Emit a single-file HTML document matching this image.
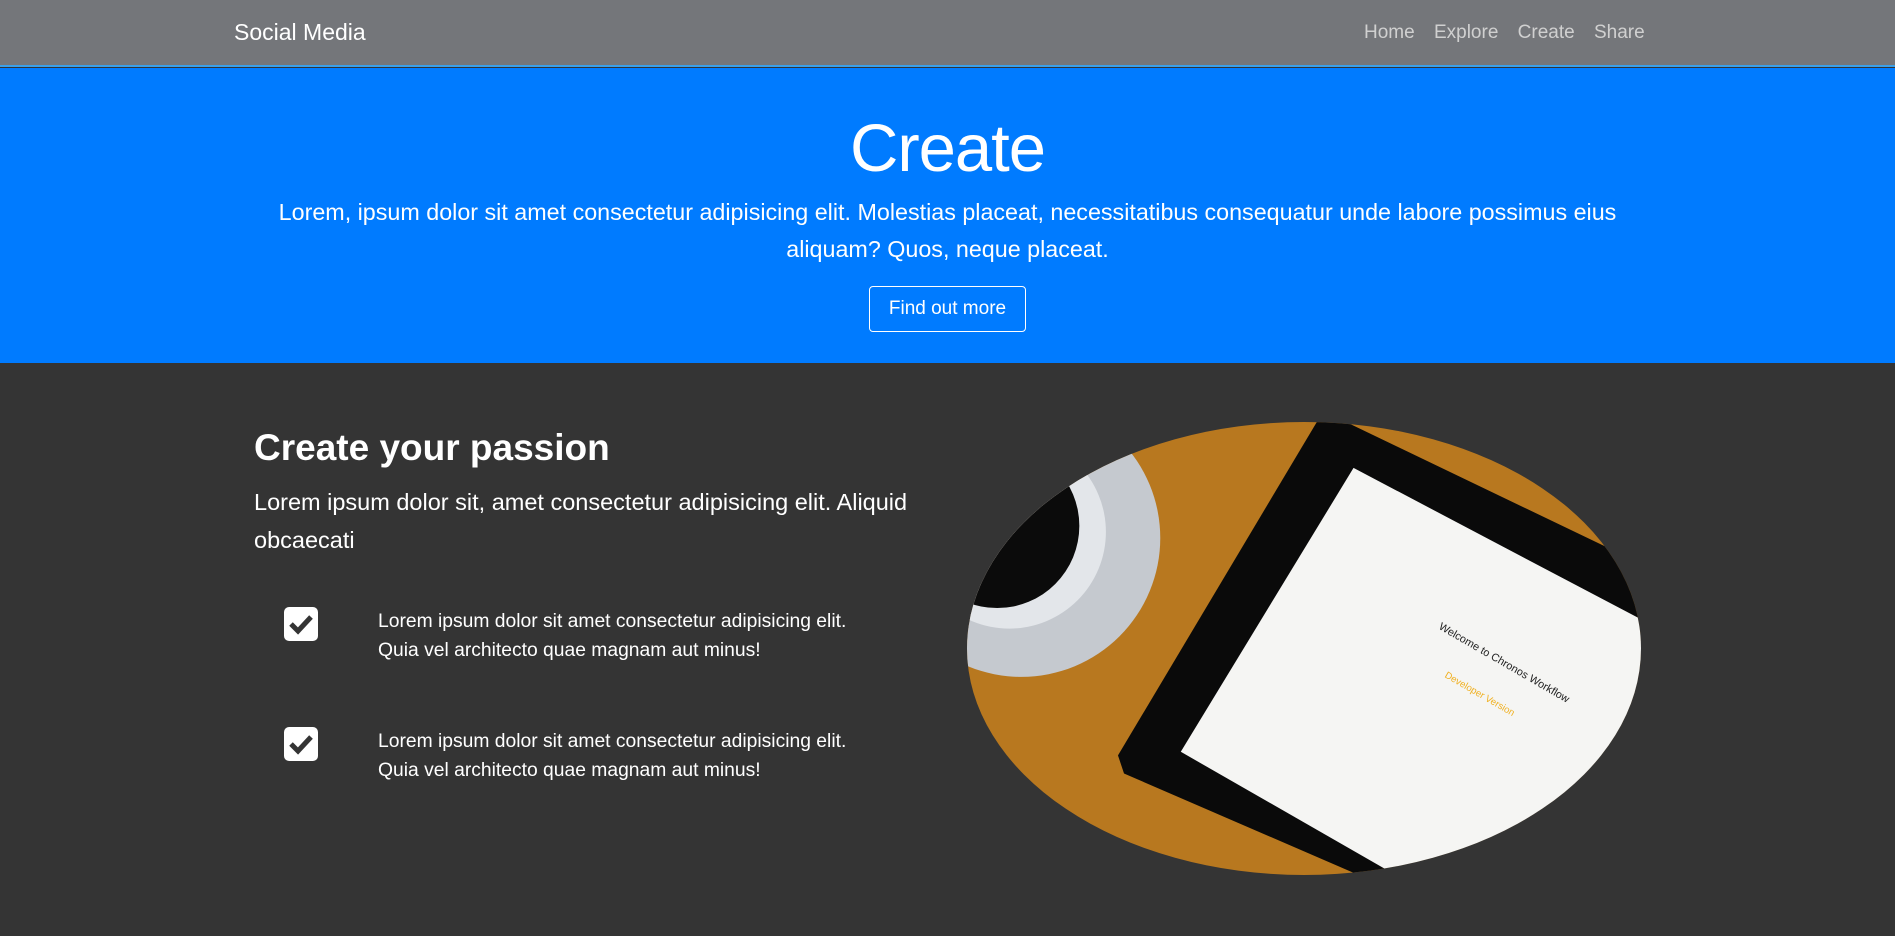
<!DOCTYPE html>
<html><head><meta charset="utf-8"><style>
*{margin:0;padding:0;box-sizing:border-box}
body{width:1895px;height:936px;overflow:hidden;background:#343434;font-family:"Liberation Sans",sans-serif;position:relative}
.nav{position:absolute;left:0;top:0;width:1895px;height:67px;background:#74767a;border-bottom:2px solid #3ba0e8}
.brand{position:absolute;left:234px;top:19px;color:#fff;font-size:23px}
.links{position:absolute;left:1364px;top:22px;color:#d0d0d0;font-size:19px;word-spacing:14px}
.hero{position:absolute;left:0;top:68px;width:1895px;height:295px;background:#007bff;color:#fff;text-align:center}
.hero h1{font-weight:300;font-size:67px;position:absolute;top:42px;width:100%;letter-spacing:-1px}
.hero p{position:absolute;left:265px;width:1365px;top:126px;font-size:23.3px;line-height:37px}
.btn{position:absolute;left:869px;top:218px;width:157px;height:46px;border:1px solid #fff;border-radius:4px;font-size:19px;line-height:44px}
h2{position:absolute;left:254px;top:427px;color:#fff;font-size:37px;font-weight:bold}
.sub{position:absolute;left:254px;top:483px;width:700px;color:#fff;font-size:23.5px;line-height:38px}
.chk{position:absolute;left:284px;width:34px;height:34px;background:#fff;border-radius:5px}
.txt{position:absolute;left:378px;color:#fff;font-size:19.3px;line-height:29px}
</style></head><body>
<div class="nav"><div class="brand">Social Media</div><div class="links">Home Explore Create Share</div></div>
<div class="hero"><h1>Create</h1><p>Lorem, ipsum dolor sit amet consectetur adipisicing elit. Molestias placeat, necessitatibus consequatur unde labore possimus eius aliquam? Quos, neque placeat.</p><div class="btn">Find out more</div></div>
<h2>Create your passion</h2>
<div class="sub">Lorem ipsum dolor sit, amet consectetur adipisicing elit. Aliquid obcaecati</div>
<div class="chk" style="top:607px"><svg width="34" height="34" viewBox="0 0 34 34"><path d="M7 17 L14 24 L27 10" stroke="#343434" stroke-width="5" fill="none"/></svg></div>
<div class="txt" style="top:607px">Lorem ipsum dolor sit amet consectetur adipisicing elit.<br>Quia vel architecto quae magnam aut minus!</div>
<div class="chk" style="top:727px"><svg width="34" height="34" viewBox="0 0 34 34"><path d="M7 17 L14 24 L27 10" stroke="#343434" stroke-width="5" fill="none"/></svg></div>
<div class="txt" style="top:727px">Lorem ipsum dolor sit amet consectetur adipisicing elit.<br>Quia vel architecto quae magnam aut minus!</div>
<svg style="position:absolute;left:967px;top:422px" width="674" height="453" viewBox="800 349 558 375" preserveAspectRatio="none">
<defs><clipPath id="c"><ellipse cx="1079" cy="536.5" rx="279" ry="187.5"/></clipPath></defs>
<g clip-path="url(#c)">
<rect x="790" y="340" width="580" height="400" fill="#b8781f"/>
<circle cx="845" cy="445" r="115" fill="#c5c9cf"/>
<circle cx="835" cy="440" r="80" fill="#e3e6ea"/>
<circle cx="825" cy="435" r="68" fill="#0b0b0b"/>
<polygon points="1095,340 1470,520 1300,800 930,640 925,625" fill="#0a0a0a"/>
<polygon points="1120,387 1420,545 1270,790 977,622" fill="#f5f5f3"/>
<text x="1190" y="520" font-size="9" fill="#222" transform="rotate(30 1190 520)">Welcome to Chronos Workflow</text>
<text x="1195" y="560" font-size="8" fill="#f0b020" transform="rotate(30 1195 560)">Developer Version</text>
</g></svg>
</body></html>
